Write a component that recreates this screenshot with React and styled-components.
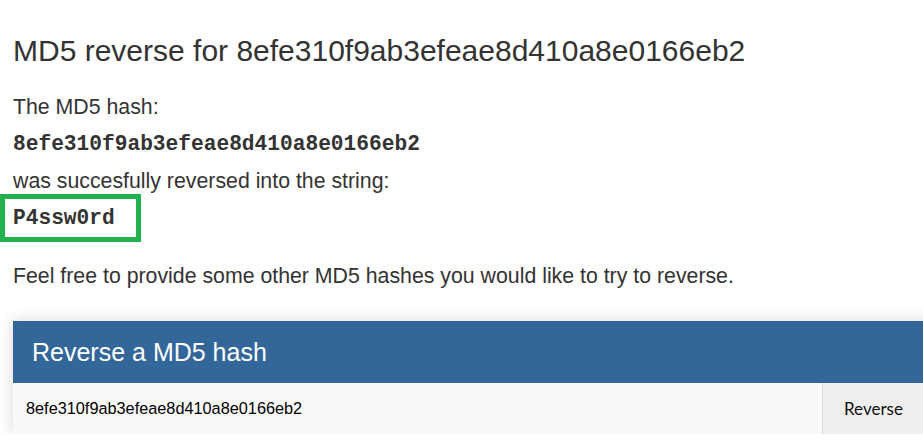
import styled, { createGlobalStyle } from "styled-components";

const GlobalStyle = createGlobalStyle`
  html, body {
    margin: 0;
    padding: 0;
    background: #fff;
    overflow: hidden;
  }
  body {
    font-family: "Liberation Sans", Arial, sans-serif;
    color: #333;
  }
`;

const Page = styled.main`
  padding: 33px 0 0 13px;
`;

const Title = styled.h1`
  margin: 0 0 20px 0;
  font-size: 30px;
  line-height: 36px;
  font-weight: 400;
  color: #333;
`;

const Line = styled.p`
  margin: ${(p) => (p.$gap ? `${p.$gap}px` : "0")} 0 0 0;
  font-size: ${(p) => (p.$mono ? "21.2px" : "21.3px")};
  line-height: 37px;
  font-family: ${(p) =>
    p.$mono
      ? `"Liberation Mono", "Courier New", monospace`
      : `"Liberation Sans", Arial, sans-serif`};
  font-weight: ${(p) => (p.$mono ? 700 : 400)};
`;

const Highlight = styled.div`
  box-sizing: border-box;
  width: 141px;
  margin: -6px 0 -5px -13px;
  padding: 1px 0 0 8px;
  border: 5px solid #22b14c;
  font-family: "Liberation Mono", "Courier New", monospace;
  font-weight: 700;
  font-size: 21.2px;
  line-height: 37px;
`;

const Panel = styled.section`
  margin: 26px -30px 0 0;
  box-shadow: 0 0 14px rgba(0, 0, 0, 0.16);
`;

const PanelHeader = styled.h2`
  margin: 0;
  padding: 0 19px;
  height: 62px;
  line-height: 62px;
  background: #336699;
  color: #fff;
  font-size: 25px;
  font-weight: 400;
`;

const Form = styled.form`
  display: flex;
  height: 51px;
  background: #f8f8f8;
`;

const HashInput = styled.input`
  flex: 1;
  min-width: 0;
  border: none;
  outline: none;
  background: transparent;
  padding: 0 13px;
  font-family: "Liberation Sans", Arial, sans-serif;
  font-size: 16.3px;
  color: #000;
`;

const SubmitButton = styled.button`
  width: 131px;
  flex: none;
  border: none;
  border-left: 1px solid #dcdcdc;
  background: #eeeeee;
  padding: 0 0 0 21px;
  text-align: left;
  font-family: Lato, "Liberation Sans", sans-serif;
  font-size: 17px;
  color: #111;
  cursor: pointer;
`;

const HASH = "8efe310f9ab3efeae8d410a8e0166eb2";

export default function App() {
  return (
    <>
      <GlobalStyle />
      <Page>
        <Title>MD5 reverse for {HASH}</Title>
        <Line>The MD5 hash:</Line>
        <Line $mono>{HASH}</Line>
        <Line>was succesfully reversed into the string:</Line>
        <Highlight>P4ssw0rd</Highlight>
        <Line $gap={21}>
          Feel free to provide some other MD5 hashes you would like to try to reverse.
        </Line>
        <Panel>
          <PanelHeader>Reverse a MD5 hash</PanelHeader>
          <Form onSubmit={(e) => e.preventDefault()}>
            <HashInput defaultValue={HASH} />
            <SubmitButton type="submit">Reverse</SubmitButton>
          </Form>
        </Panel>
      </Page>
    </>
  );
}
